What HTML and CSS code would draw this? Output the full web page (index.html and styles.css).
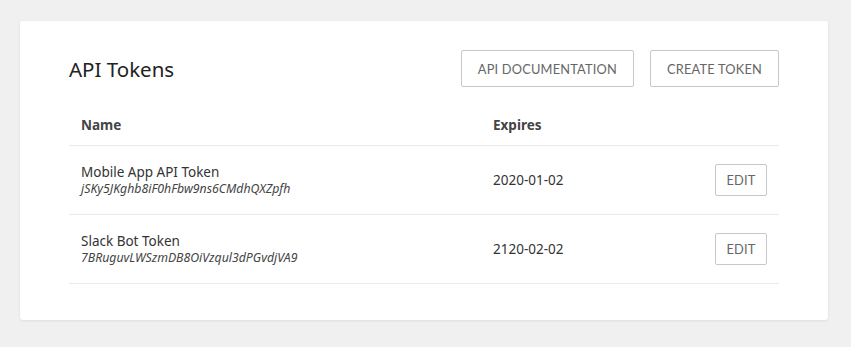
FILE: index.html
```html
<!DOCTYPE html>
<html lang="en">
<head>
    <meta charset="UTF-8">
    <meta name="viewport" content="width=device-width, initial-scale=1.0">
    <title>API Tokens</title>
    <link rel="stylesheet" href="styles.css">
</head>
<body>

    <div class="card">
        <div class="card-header">
            <h1>API Tokens</h1>
            <div class="actions">
                <button class="btn">API Documentation</button>
                <button class="btn">Create Token</button>
            </div>
        </div>

        <table class="tokens">
            <thead>
                <tr>
                    <th class="col-name">Name</th>
                    <th class="col-expires">Expires</th>
                    <th class="col-action"></th>
                </tr>
            </thead>
            <tbody>
                <tr>
                    <td>
                        <div class="token-name">Mobile App API Token</div>
                        <div class="token-key">jSKy5JKghb8iF0hFbw9ns6CMdhQXZpfh</div>
                    </td>
                    <td>2020-01-02</td>
                    <td class="col-action"><button class="btn btn-small">Edit</button></td>
                </tr>
                <tr>
                    <td>
                        <div class="token-name">Slack Bot Token</div>
                        <div class="token-key">7BRuguvLWSzmDB8OiVzqul3dPGvdjVA9</div>
                    </td>
                    <td>2120-02-02</td>
                    <td class="col-action"><button class="btn btn-small">Edit</button></td>
                </tr>
            </tbody>
        </table>
    </div>

</body>
</html>
```

FILE: styles.css
```css
body {
    margin: 0;
    padding: 21px 23px 27px 20px;
    background-color: #f0f0f0;
    font-family: "Noto Sans", "Open Sans", sans-serif;
    color: #333;
}
.card {
    background-color: #fff;
    border-radius: 3px;
    box-shadow: 0 1px 3px rgba(0, 0, 0, 0.08);
    padding: 29px 49px 36px 49px;
}
.card-header {
    display: flex;
    justify-content: space-between;
    align-items: center;
    margin-bottom: 17px;
}
h1 {
    margin: 0;
    font-size: 20.5px;
    font-weight: 400;
    color: #222;
}
.actions {
    display: flex;
    gap: 16px;
}
.btn {
    height: 37px;
    padding: 0 16px;
    font-family: "Lato", sans-serif;
    font-size: 12.8px;
    text-transform: uppercase;
    letter-spacing: 0.2px;
    color: #666;
    background-color: #fff;
    border: 1px solid #c8c8c8;
    border-radius: 2px;
    cursor: pointer;
}
.btn-small {
    height: 32px;
    width: 52px;
    padding: 0;
}
/* テーブル */
.tokens {
    width: 100%;
    border-collapse: collapse;
}
.tokens th {
    height: 41px;
    padding: 0 12px;
    text-align: left;
    font-size: 13.5px;
    font-weight: 700;
    color: #444;
    border-bottom: 1px solid #ebebeb;
}
.tokens td {
    height: 68px;
    padding: 0 12px;
    font-size: 13.5px;
    color: #333;
    border-bottom: 1px solid #ebebeb;
}
.col-name {
    width: 388px;
}
.col-action {
    text-align: right;
}
.token-name {
    font-size: 13.5px;
    line-height: 18px;
}
.token-key {
    font-size: 12.3px;
    font-style: italic;
    color: #444;
    line-height: 16px;
}
```
